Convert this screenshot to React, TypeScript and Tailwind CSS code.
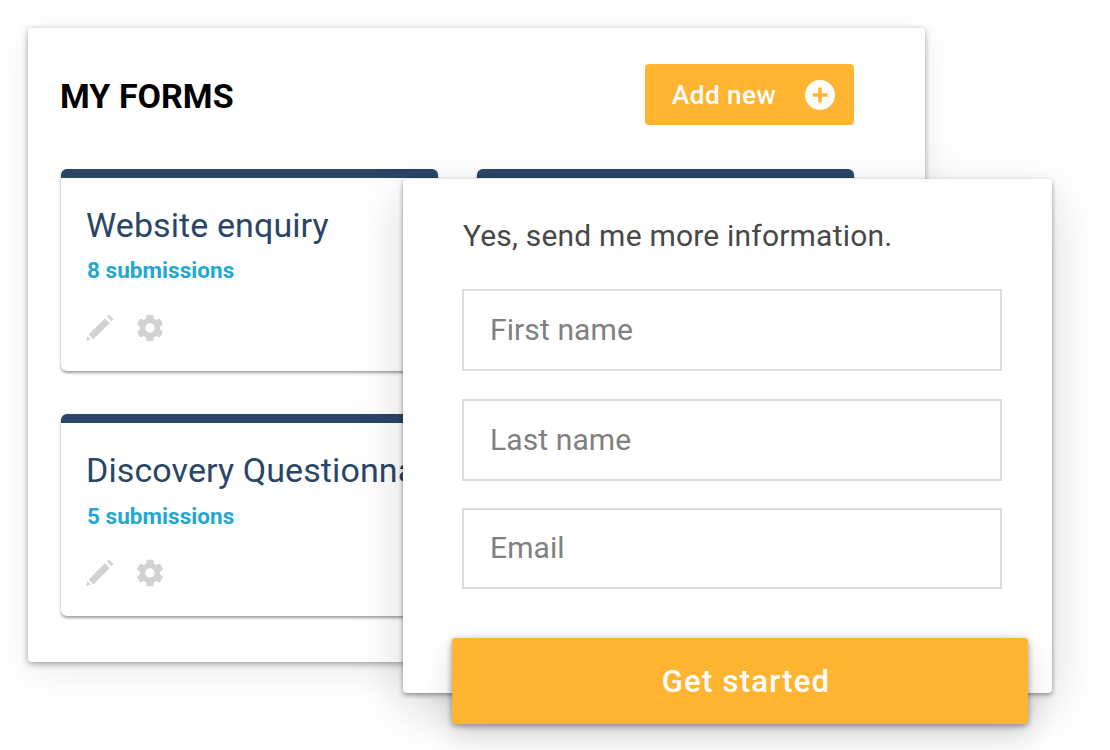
const fontRoboto = { fontFamily: 'Roboto, sans-serif' };

const PencilIcon = () => (
    <svg viewBox="0 0 28 28" className="w-7 h-7 fill-[#d2d2d2]">
        <path d="M0 27l1.4-4.8 3.4 3.4z" />
        <path d="M2.6 20.6L19 4.2l4.8 4.8L7.4 25.4z" />
        <path d="M20.8 2.4L22.8.4l4.8 4.8-2 2z" />
    </svg>
);

const GearIcon = () => (
    <svg viewBox="0 0 24 24" className="w-8 h-8 fill-[#d2d2d2]">
        <path d="M19.43 12.98c.04-.32.07-.64.07-.98s-.03-.66-.07-.98l2.11-1.65c.19-.15.24-.42.12-.64l-2-3.46c-.12-.22-.39-.3-.61-.22l-2.49 1c-.52-.4-1.08-.73-1.69-.98l-.38-2.65C14.46 2.18 14.25 2 14 2h-4c-.25 0-.46.18-.49.42l-.38 2.65c-.61.25-1.17.59-1.69.98l-2.49-1c-.23-.09-.49 0-.61.22l-2 3.46c-.13.22-.07.49.12.64l2.11 1.65c-.04.32-.07.65-.07.98s.03.66.07.98l-2.11 1.65c-.19.15-.24.42-.12.64l2 3.46c.12.22.39.3.61.22l2.49-1c.52.4 1.08.73 1.69.98l.38 2.65c.03.24.24.42.49.42h4c.25 0 .46-.18.49-.42l.38-2.65c.61-.25 1.17-.59 1.69-.98l2.49 1c.23.09.49 0 .61-.22l2-3.46c.12-.22.07-.49-.12-.64l-2.11-1.65zM12 15.5c-1.93 0-3.5-1.57-3.5-3.5s1.57-3.5 3.5-3.5 3.5 1.57 3.5 3.5-1.57 3.5-3.5 3.5z" />
    </svg>
);

const PlusCircle = () => (
    <svg viewBox="0 0 30 30" className="w-[30px] h-[30px]">
        <circle cx="15" cy="15" r="15" fill="#fff" />
        <path d="M13.2 7.5h3.6v5.7h5.7v3.6h-5.7v5.7h-3.6v-5.7H7.5v-3.6h5.7z" fill="#ffb432" />
    </svg>
);

const FormCard = ({ title, submissions, subClass }: { title: string; submissions?: string; subClass?: string }) => (
    <div className="w-[377px] h-[202px] bg-white rounded-[6px] border-t-[9px] border-[#2a4666] shadow-[0_2px_3px_rgba(0,0,0,0.38)] pl-[26px] pt-[20px]">
        <h3 className="text-[34px] leading-[55px] h-[51px] ml-[-1px] text-[#2a4666] whitespace-nowrap tracking-[0.1px]">{title}</h3>
        {submissions && (
            <p className={`text-[22.5px] leading-[30px] font-bold tracking-[0.05px] text-[#1fa8d6] ${subClass}`}>{submissions}</p>
        )}
        {submissions && (
            <div className="flex items-center gap-[20px] mt-[27px] ml-[-1px]">
                <PencilIcon />
                <GearIcon />
            </div>
        )}
    </div>
);

const TextField = ({ placeholder, className }: { placeholder: string; className: string }) => (
    <input
        type="text"
        placeholder={placeholder}
        className={`w-[540px] ml-[-1px] border-2 border-[#dcdcdc] pl-[26px] pr-[26px] pb-[2px] text-[30px] tracking-[0.1px] text-[#444] placeholder:text-[#808080] outline-none ${className}`}
    />
);

const App = () => {
    return (
        <div className="relative w-[1110px] h-[750px] bg-white overflow-hidden pt-[28px] pl-[28px]" style={fontRoboto}>
            <div className="w-[897px] h-[634px] bg-white rounded-[4px] shadow-[0_2px_6px_rgba(0,0,0,0.35),0_10px_40px_rgba(0,0,0,0.08)] pl-[33px] pt-[36px]">
                <div className="flex items-center justify-between w-[793px] h-[61px]">
                    <h2 className="text-[34px] font-bold text-black pt-[4px] ml-[-1px] tracking-[0.03px]">MY FORMS</h2>
                    <button className="w-[209px] h-[61px] bg-[#ffb432] rounded-[4px] flex items-center justify-between pl-[27px] pr-[19px] text-white text-[26px] font-medium tracking-[0.5px]">
                        <span className="pt-[2px]">Add new</span>
                        <PlusCircle />
                    </button>
                </div>
                <div className="grid grid-cols-[377px_377px] gap-x-[39px] gap-y-[43px] mt-[44px]">
                    <FormCard title="Website enquiry" submissions="8 submissions" subClass="mt-[6px]" />
                    <FormCard title="" />
                    <FormCard title="Discovery Questionnaire" submissions="5 submissions" subClass="mt-[7px] mb-[-1px]" />
                </div>
            </div>

            {/* sign up panel sits over the forms list */}
            <div className="absolute left-[403px] top-[179px] w-[649px] h-[514px] bg-white rounded-[4px] shadow-[0_2px_5px_rgba(0,0,0,0.4),0_16px_50px_rgba(0,0,0,0.16)] pl-[60px] pr-[50px] pt-[34px]">
                <p className="text-[30px] leading-[46px] tracking-[0.2px] text-[#484848] mb-[30px]">Yes, send me more information.</p>
                <TextField placeholder="First name" className="h-[82px] mb-[28px]" />
                <TextField placeholder="Last name" className="h-[82px] mb-[27px]" />
                <TextField placeholder="Email" className="h-[81px]" />
                <button className="block w-[576px] h-[86px] mt-[49px] ml-[-11px] pl-[12px] pt-[2px] bg-[#ffb432] rounded-[4px] text-white text-[31px] font-medium tracking-[1.25px] shadow-[0_2px_6px_rgba(0,0,0,0.4),0_12px_30px_rgba(0,0,0,0.15)]">
                    Get started
                </button>
            </div>
        </div>
    );
};

export default App;
